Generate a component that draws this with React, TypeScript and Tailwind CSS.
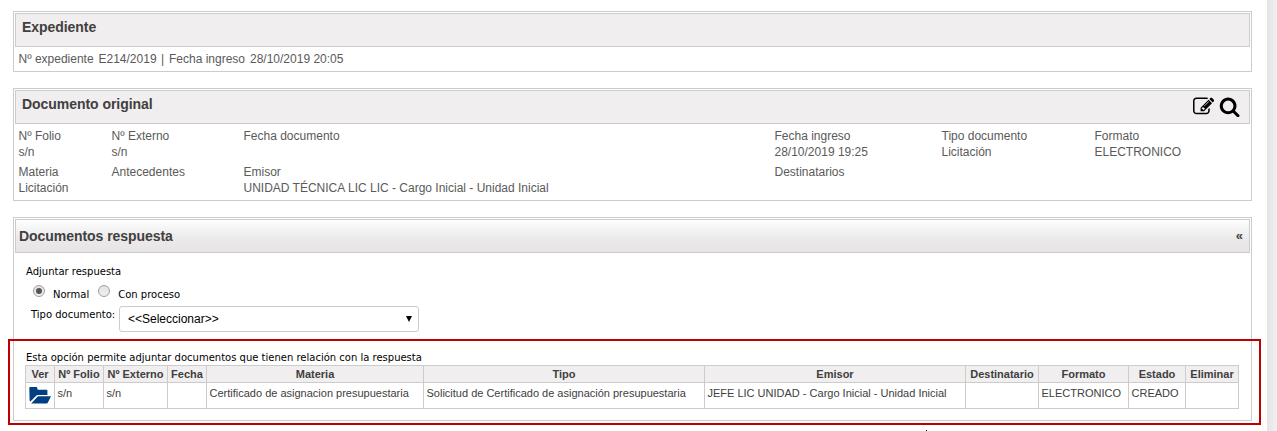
import React from "react";

interface Field {
  label: string;
  value?: string;
}

interface Column {
  title: string;
  width: string;
  value?: string;
}

const firstRow: Field[] = [
  { label: "Nº Folio", value: "s/n" },
  { label: "Nº Externo", value: "s/n" },
  { label: "Fecha documento" },
  { label: "Fecha ingreso", value: "28/10/2019 19:25" },
  { label: "Tipo documento", value: "Licitación" },
  { label: "Formato", value: "ELECTRONICO" },
];

const secondRow: Field[] = [
  { label: "Materia", value: "Licitación" },
  { label: "Antecedentes" },
  { label: "Emisor", value: "UNIDAD TÉCNICA LIC LIC - Cargo Inicial - Unidad Inicial" },
  { label: "Destinatarios" },
];

const columns: Column[] = [
  { title: "Ver", width: "w-[29px]" },
  { title: "Nº Folio", width: "w-[49px]", value: "s/n" },
  { title: "Nº Externo", width: "w-[64px]", value: "s/n" },
  { title: "Fecha", width: "w-[39px]" },
  { title: "Materia", width: "w-[217px]", value: "Certificado de asignacion presupuestaria" },
  { title: "Tipo", width: "w-[281px]", value: "Solicitud de Certificado de asignación presupuestaria" },
  { title: "Emisor", width: "w-[261px]", value: "JEFE LIC UNIDAD - Cargo Inicial - Unidad Inicial" },
  { title: "Destinatario", width: "w-[73px]" },
  { title: "Formato", width: "w-[90px]", value: "ELECTRONICO" },
  { title: "Estado", width: "w-[57px]", value: "CREADO" },
  { title: "Eliminar", width: "w-[53px]" },
];

const EditIcon = () => (
  <svg viewBox="0 0 1792 1792" className="h-[21.3px] w-[21.3px]" fill="currentColor">
    <path d="M888 1184l116-116-152-152-116 116v56h96v96h56zm440-720q-16-16-33 1l-350 350q-17 17-1 33t33-1l350-350q17-17 1-33zm80 594v190q0 119-84.5 203.5t-203.5 84.5h-832q-119 0-203.5-84.5t-84.5-203.5v-832q0-119 84.5-203.5t203.5-84.5h832q63 0 117 25 15 7 18 23 3 17-9 29l-49 49q-14 14-32 8-23-6-45-6h-832q-66 0-113 47t-47 113v832q0 66 47 113t113 47h832q66 0 113-47t47-113v-126q0-13 9-22l64-64q15-15 35-7t20 29zm-96-738l288 288-672 672h-288v-288zm444 132l-92 92-288-288 92-92q28-28 68-28t68 28l152 152q28 28 28 68t-28 68z" />
  </svg>
);

const SearchIcon = () => (
  <svg viewBox="0 0 1792 1792" className="h-[21.3px] w-[21.3px]" fill="currentColor">
    <path d="M1216 832q0-185-131.5-316.5t-316.5-131.5-316.5 131.5-131.5 316.5 131.5 316.5 316.5 131.5 316.5-131.5 131.5-316.5zm512 832q0 52-38 90t-90 38q-54 0-90-38l-343-342q-179 124-399 124-143 0-273.5-55.5t-225-150-150-225-55.5-273.5 55.5-273.5 150-225 225-150 273.5-55.5 273.5 55.5 225 150 150 225 55.5 273.5q0 220-124 399l343 343q37 37 37 90z" />
  </svg>
);

const FolderIcon = () => (
  <svg viewBox="0 0 22 17" className="h-[17px] w-[22px]" fill="#023f80">
    <path d="M.3.8Q.3 0 1.2 0H7.4Q8 0 8.2.8L8.7 2.8H17.6Q18.4 2.8 18.4 3.6V8H9Q7.9 8 7.2 8.8L1.4 14.6Q.6 14 .6 13Z" />
    <path d="M9.6 9.3H22L18.9 15.5Q18.4 16.4 17.4 16.4H2.2L8.2 10Q8.8 9.3 9.6 9.3Z" />
  </svg>
);

const Info = ({ label, value }: Field) => (
  <div className="h-9 whitespace-nowrap">
    <div>{label}</div>
    <div>{value}</div>
  </div>
);

const Radio = ({ checked }: { checked?: boolean }) => (
  <span className="flex h-3 w-3 items-center justify-center rounded-full border border-[#a0a0a0] bg-linear-to-b from-[#e2e2e2] to-[#f0f0f0]">
    {checked && <span className="h-1.5 w-1.5 rounded-full bg-[#555]" />}
  </span>
);

const App = () => {
  return (
    <div className="relative flex h-[431px] w-[1277px] overflow-hidden bg-white font-['Liberation_Sans',Arial,sans-serif] text-xs text-[#5a5a5a]">
      <main className="w-[1267px] pt-[11px] pl-[13px]">
        <section className="h-[61px] w-[1239px] border border-[#ccc] p-px">
          <h2 className="h-[34px] border border-[#ccc] bg-[#f0eeee] pt-[3px] pl-1.5 text-[14px] leading-5 font-bold tracking-[-0.05px] text-[#404040]">
            Expediente
          </h2>
          <p className="flex pt-1 pl-[3.5px] leading-4 whitespace-nowrap">
            <span className="w-20">Nº expediente</span>
            <span className="w-[62.5px]">E214/2019</span>
            <span className="w-2">|</span>
            <span className="w-[81px]">Fecha ingreso</span>
            <span>28/10/2019 20:05</span>
          </p>
        </section>

        <section className="mt-4 h-[113px] w-[1239px] border border-[#ccc] p-px">
          <div className="flex h-[34px] items-start justify-between border border-[#ccc] bg-[#f0eeee] pr-[8.5px] pl-1.5">
            <h2 className="pt-[3px] text-[14px] leading-5 font-bold tracking-[-0.05px] text-[#404040]">
              Documento original
            </h2>
            <div className="flex gap-[5px] pt-[5px] text-black">
              <EditIcon />
              <SearchIcon />
            </div>
          </div>
          <div className="grid grid-cols-[93px_132px_531px_167px_153px_1fr] pt-1 pl-[3.5px] leading-4">
            {firstRow.map((field) => (
              <Info key={field.label} {...field} />
            ))}
            {secondRow.map((field) => (
              <Info key={field.label} {...field} />
            ))}
          </div>
        </section>

        <section className="mt-4 h-[204px] w-[1239px] border border-[#ccc] p-px">
          <div className="flex h-[34px] items-center justify-between border border-[#ccc] bg-linear-to-b from-[#fefefe] via-[#ebe9e9] via-60% to-[#e7e5e5] pr-1.5 pl-[3px] font-bold text-[#404040]">
            <h2 className="text-[14px] leading-5 tracking-[-0.05px]">Documentos respuesta</h2>
            <button type="button" className="text-[13px]">«</button>
          </div>
          <div className="pl-[11px] font-['DejaVu_Sans',Verdana,sans-serif] text-[10px] leading-3 text-black">
            <p className="pt-[13px]">Adjuntar respuesta</p>
            <div className="flex h-[26px] pt-[7px] pl-[7px]">
              <Radio checked />
              <span className="mt-1 ml-2">Normal</span>
              <span className="ml-[9px]">
                <Radio />
              </span>
              <span className="mt-1 ml-2">Con proceso</span>
            </div>
            <div className="flex pt-[2px] pl-[5px]">
              <span className="w-[88px] pt-[3px] whitespace-nowrap">Tipo documento:</span>
              <button
                type="button"
                className="flex h-[26px] w-[300px] items-center justify-between rounded-[3px] border border-[#ccc] pr-[6px] pl-2 font-['Liberation_Sans',Arial,sans-serif] text-xs"
              >
                &lt;&lt;Seleccionar&gt;&gt;
                <svg viewBox="0 0 6 6" className="h-1.5 w-1.5">
                  <path d="M0 0H6L3 6Z" />
                </svg>
              </button>
            </div>
            <p className="pt-5">
              Esta opción permite adjuntar documentos que tienen relación con la respuesta
            </p>
            <table className="mt-px -ml-px w-[1214px] table-fixed border-separate border-spacing-0 border-t border-r border-[#ccc] font-['Liberation_Sans',Arial,sans-serif] text-[11px] text-[#404040]">
              <thead>
                <tr className="h-[17px] bg-[#f0eeee]">
                  {columns.map((col) => (
                    <th key={col.title} className={`border-b border-l border-[#ccc] p-0 whitespace-nowrap ${col.width}`}>
                      {col.title}
                    </th>
                  ))}
                </tr>
              </thead>
              <tbody>
                <tr className="h-[26px]">
                  {columns.map((col) => (
                    <td key={col.title} className="border-b border-l border-[#ccc] p-0 pt-1 pl-[2.5px] align-top whitespace-nowrap">
                      {col.title === "Ver" ? <FolderIcon /> : col.value}
                    </td>
                  ))}
                </tr>
              </tbody>
            </table>
          </div>
        </section>
      </main>
      <aside className="flex-1 bg-linear-to-r from-[#e4e4e4] to-[#f1f1f1]" />

      {/* highlighted area over the attachments table */}
      <div className="absolute top-[339px] left-2 h-[86px] w-[1253px] border-2 border-[#c00000]" />
      <span className="absolute top-[430px] left-[926px] h-px w-px bg-black" />
    </div>
  );
};

export default App;
